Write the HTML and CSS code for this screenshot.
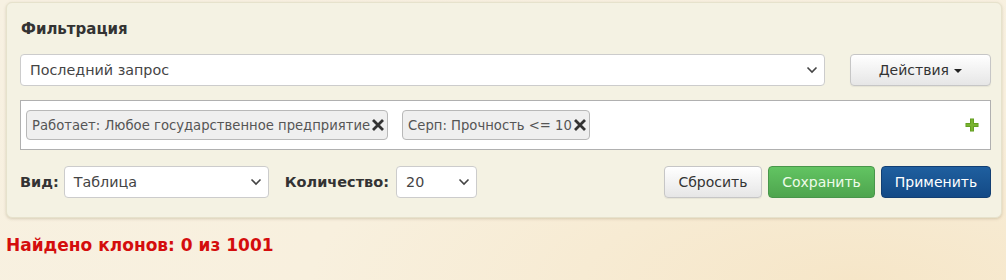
FILE: index.html
```html
<!DOCTYPE html>
<html lang="ru">
<head>
    <meta charset="UTF-8">
    <title>Фильтрация</title>
    <link rel="stylesheet" href="styles.css">
</head>
<body>
    <div class="panel">
        <div class="title">Фильтрация</div>

        <div class="row">
            <div class="select wide">
                <span>Последний запрос</span>
                <svg class="chev" width="12" height="8" viewBox="0 0 12 8"><path d="M1.5 1.5 L6 6 L10.5 1.5" fill="none" stroke="#444" stroke-width="1.6"/></svg>
            </div>
            <button class="btn actions">Действия <span class="caret"></span></button>
        </div>

        <div class="filters">
            <span class="tag">Работает: Любое государственное предприятие<svg class="x" width="14" height="14" viewBox="0 0 14 14"><path d="M2 2 L12 12 M12 2 L2 12" stroke="#333" stroke-width="2.8"/></svg></span>
            <span class="tag">Серп: Прочность &lt;= 10<svg class="x" width="14" height="14" viewBox="0 0 14 14"><path d="M2 2 L12 12 M12 2 L2 12" stroke="#333" stroke-width="2.8"/></svg></span>
            <svg class="plus" width="14" height="14" viewBox="0 0 14 14"><path d="M5 0.5 H9 V5 H13.5 V9 H9 V13.5 H5 V9 H0.5 V5 H5 Z" fill="#5e9a1e"/><path d="M5.8 1.2 H8.2 V5.8 H12.8 V8.2 H8.2 V12.8 H5.8 V8.2 H1.2 V5.8 H5.8 Z" fill="#7ab430"/></svg>
        </div>

        <div class="row bottom">
            <label class="lbl">Вид:</label>
            <div class="select view">
                <span>Таблица</span>
                <svg class="chev" width="12" height="8" viewBox="0 0 12 8"><path d="M1.5 1.5 L6 6 L10.5 1.5" fill="none" stroke="#444" stroke-width="1.6"/></svg>
            </div>
            <label class="lbl count">Количество:</label>
            <div class="select num">
                <span>20</span>
                <svg class="chev" width="12" height="8" viewBox="0 0 12 8"><path d="M1.5 1.5 L6 6 L10.5 1.5" fill="none" stroke="#444" stroke-width="1.6"/></svg>
            </div>
            <div class="spacer"></div>
            <button class="btn reset">Сбросить</button>
            <button class="btn save">Сохранить</button>
            <button class="btn apply">Применить</button>
        </div>
    </div>

    <div class="found">Найдено клонов: 0 из 1001</div>
</body>
</html>
```

FILE: styles.css
```css
body { margin: 0; font-family: "DejaVu Sans", Verdana, sans-serif; font-size: 13px; color: #333;
    background: radial-gradient(ellipse at 85% 100%, #f6e6c8 0%, #f8f0de 45%, #f7f1e2 100%); height: 280px; overflow: hidden; }
.panel { margin: 2px 4px 0 6px; padding: 15px 10px 19px 13px; background: #f4f2e3; border: 1px solid #e6e2cc; border-radius: 6px; box-shadow: 0 1px 3px rgba(120, 100, 60, 0.25); }
.title { font-weight: bold; font-size: 15px; line-height: 22px; margin-bottom: 14px; color: #333; padding-left: 1px; }
.row { display: flex; align-items: center; }
.select { display: flex; align-items: center; justify-content: space-between; height: 32px; box-sizing: border-box; background: #fff; border: 1px solid #ccc; border-radius: 4px; padding: 0 6px 0 9px; font-size: 14.3px; color: #444; }
.select.wide { flex: 1; margin-right: 25px; }
.btn { height: 32px; box-sizing: border-box; border-radius: 4px; font-family: inherit; font-size: 14px; padding: 0; cursor: pointer; }
.actions, .reset { background: linear-gradient(#ffffff, #e6e6e6); border: 1px solid #c6c6c6; color: #333; box-shadow: inset 0 1px 0 #fff, 0 1px 1px rgba(0,0,0,0.06); }
.actions { width: 141px; }
.caret { display: inline-block; width: 0; height: 0; border-left: 4px solid transparent; border-right: 4px solid transparent; border-top: 4px solid #222; vertical-align: middle; margin-left: 1px; }
.filters { margin-top: 14px; height: 50px; box-sizing: border-box; background: #fff; border: 1px solid #b0b0b0; display: flex; align-items: center; gap: 14px; padding: 0 11px 0 5px; }
.tag { display: inline-flex; align-items: center; height: 30px; box-sizing: border-box; background: #efefef; border: 1px solid #b8b8b8; border-radius: 4px; padding: 0 2px 0 5px; font-size: 13.2px; color: #555; }
.tag .x { margin-left: 1px; }
.plus { margin-left: auto; }
.bottom { margin-top: 16px; }
.lbl { font-weight: bold; font-size: 14.5px; color: #333; margin-right: 5px; }
.select.view { width: 205px; }
.lbl.count { margin-left: 16px; margin-right: 7px; }
.select.num { width: 81px; }
.spacer { flex: 1; }
.reset { width: 98px; margin-right: 6px; }
.save { width: 107px; margin-right: 6px; background: linear-gradient(#62c462, #4ea54e); border: 1px solid #48964a; color: #eefce9; }
.apply { width: 110px; background: linear-gradient(#1f5f9f, #134a86); border: 1px solid #123f73; color: #fff; }
.found { margin: 17px 0 0 6px; font-weight: bold; font-size: 17px; color: #d40d0d; }
```
